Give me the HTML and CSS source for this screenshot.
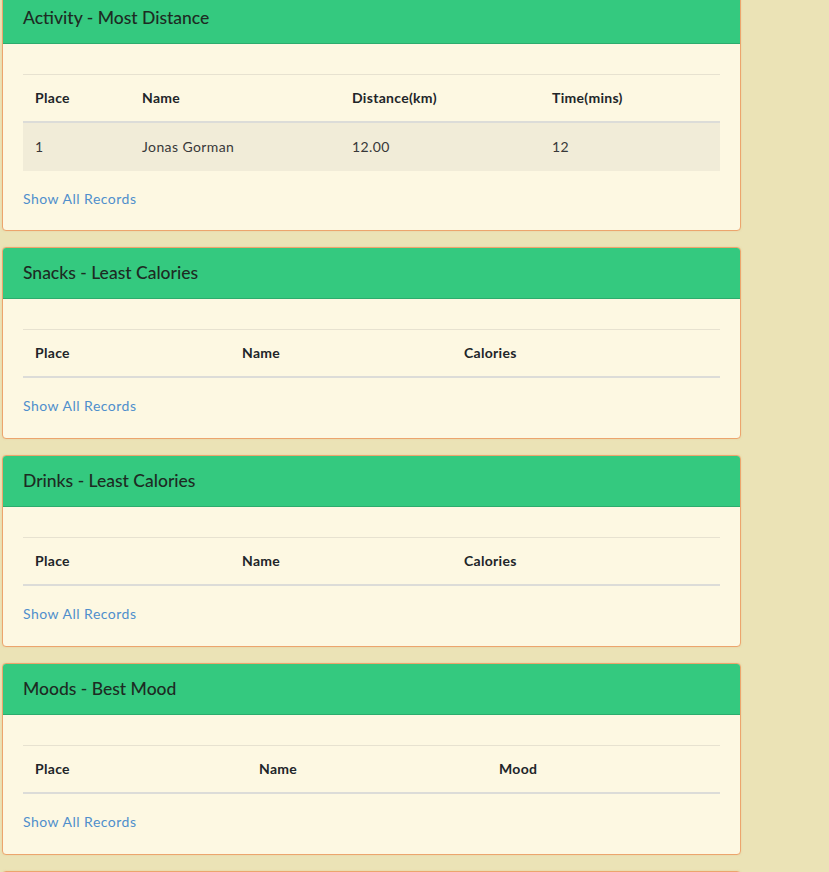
FILE: index.html
```html
<!DOCTYPE html>
<html lang="en">
<head>
<meta charset="utf-8">
<title>Leaderboards</title>
<link rel="stylesheet" href="styles.css">
</head>
<body>
<main class="board">
  <section class="card">
    <div class="card-header">Activity - Most Distance</div>
    <div class="card-body">
      <table class="table cols-activity">
        <thead><tr><th>Place</th><th>Name</th><th>Distance(km)</th><th>Time(mins)</th></tr></thead>
        <tbody><tr><td>1</td><td>Jonas Gorman</td><td>12.00</td><td>12</td></tr></tbody>
      </table>
      <a class="more" href="#">Show All Records</a>
    </div>
  </section>
  <section class="card">
    <div class="card-header">Snacks - Least Calories</div>
    <div class="card-body">
      <table class="table cols-cal">
        <thead><tr><th>Place</th><th>Name</th><th>Calories</th></tr></thead>
        <tbody></tbody>
      </table>
      <a class="more" href="#">Show All Records</a>
    </div>
  </section>
  <section class="card">
    <div class="card-header">Drinks - Least Calories</div>
    <div class="card-body">
      <table class="table cols-cal">
        <thead><tr><th>Place</th><th>Name</th><th>Calories</th></tr></thead>
        <tbody></tbody>
      </table>
      <a class="more" href="#">Show All Records</a>
    </div>
  </section>
  <section class="card">
    <div class="card-header">Moods - Best Mood</div>
    <div class="card-body">
      <table class="table cols-mood">
        <thead><tr><th>Place</th><th>Name</th><th>Mood</th></tr></thead>
        <tbody></tbody>
      </table>
      <a class="more" href="#">Show All Records</a>
    </div>
  </section>
  <section class="card card-last">
    <div class="card-header"><span class="cut">Sleep - Most Hours</span></div>
  </section>
</main>
</body>
</html>
```

FILE: styles.css
```css
html, body {
  margin: 0;
  padding: 0;
  background: #ebe3b6;
  font-family: "Lato", "Open Sans", sans-serif;
  color: #212529;
  overflow: hidden;
}

.board {
  width: 739px;
  margin: -8px 0 0 2px;
  display: flex;
  flex-direction: column;
  gap: 16px;
}

.card {
  background: #fdf8e2;
  border: 1px solid #eca56d;
  border-radius: 4px;
  overflow: hidden;
  box-shadow: 0 0 2px rgba(220, 170, 110, 0.35);
}

.card-header {
  background: #34c97f;
  color: #1d2b23;
  font-size: 17.5px;
  font-weight: 500;
  line-height: 26px;
  padding: 12px 20px;
  border-bottom: 1px solid rgba(0, 0, 0, 0.14);
}

.card:first-child .card-body {
  padding-bottom: 19px;
}

.card-last .card-header {
  height: 26px;
  border-bottom: 0;
}

.cut {
  visibility: hidden;
}

.card-body {
  padding: 20px;
}

.table {
  width: 100%;
  border-collapse: collapse;
  margin-top: 10px;
  margin-bottom: 16px;
  font-size: 14px;
  table-layout: fixed;
}

.table th,
.table td {
  text-align: left;
  padding: 12px;
}

.table th {
  font-weight: 700;
  line-height: 22px;
  letter-spacing: 0.3px;
  color: #212529;
  border-top: 1px solid #e7e2d0;
  border-bottom: 2px solid #dcdcd8;
}

.table td {
  color: #383838;
  font-weight: 400;
  line-height: 24px;
  letter-spacing: 0.4px;
  background: #f1ecd8;
}

.cols-activity th:nth-child(1) { width: 83px; }
.cols-activity th:nth-child(2) { width: 186px; }
.cols-activity th:nth-child(3) { width: 176px; }

.cols-cal th:nth-child(1) { width: 183px; }
.cols-cal th:nth-child(2) { width: 198px; }

.cols-mood th:nth-child(1) { width: 200px; }
.cols-mood th:nth-child(2) { width: 216px; }

.more {
  display: block;
  font-size: 14px;
  line-height: 24px;
  color: #4f8fcc;
  text-decoration: none;
  letter-spacing: 0.5px;
}
```
